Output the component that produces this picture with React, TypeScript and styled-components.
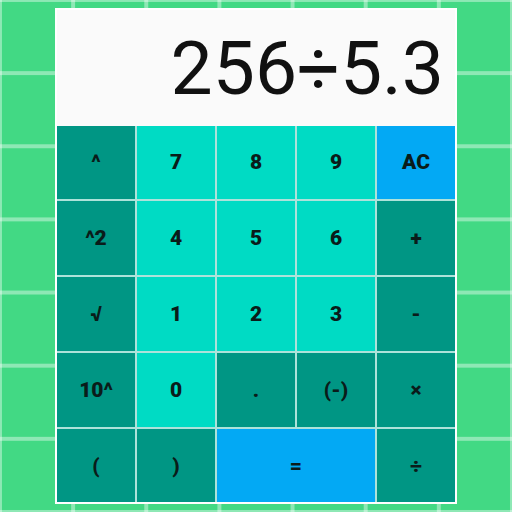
import styled, { createGlobalStyle } from 'styled-components';

const GlobalStyle = createGlobalStyle`
  html, body {
    margin: 0;
    padding: 0;
  }
  body {
    font-family: Roboto, "Noto Sans", sans-serif;
  }
`;

type Tone = 'dark' | 'light' | 'blue';

const tones: Record<Tone, string> = {
  dark: '#009684',
  light: '#00dbc4',
  blue: '#03a9f4',
};

const Page = styled.div`
  width: 512px;
  height: 512px;
  display: flex;
  align-items: center;
  justify-content: center;
  background-color: #42d984;
  background-image:
    linear-gradient(to right, rgba(255, 255, 255, 0.4) 4px, transparent 4px),
    linear-gradient(to bottom, rgba(255, 255, 255, 0.4) 4px, transparent 4px);
  background-size: calc(512px / 7) calc(512px / 7);
  background-position: -2px -2px;
`;

const Calculator = styled.div`
  width: 398px;
  padding: 2px;
  background: #ffffff;
  display: flex;
  flex-direction: column;
`;

const Display = styled.div`
  height: 116px;
  background: #fafafa;
  display: flex;
  align-items: center;
  justify-content: flex-end;
  padding-right: 11px;
  font-size: 75px;
  color: #111;
`;

const Keypad = styled.div`
  display: grid;
  grid-template-columns: repeat(5, 78px);
  grid-auto-rows: 73.8px;
  gap: 2px;
  background: #ade2da;
`;

const Key = styled.button<{ $tone: Tone; $span?: number }>`
  border: none;
  margin: 0;
  padding: 0;
  background: ${p => tones[p.$tone]};
  grid-column: span ${p => p.$span ?? 1};
  font-family: Roboto, "Noto Sans", sans-serif;
  font-weight: 900;
  font-size: 21px;
  color: #0a1c1a;
  display: flex;
  align-items: center;
  justify-content: center;
`;

const keys: { label: string; tone: Tone; span?: number }[] = [
  { label: '^', tone: 'dark' },
  { label: '7', tone: 'light' },
  { label: '8', tone: 'light' },
  { label: '9', tone: 'light' },
  { label: 'AC', tone: 'blue' },
  { label: '^2', tone: 'dark' },
  { label: '4', tone: 'light' },
  { label: '5', tone: 'light' },
  { label: '6', tone: 'light' },
  { label: '+', tone: 'dark' },
  { label: '√', tone: 'dark' },
  { label: '1', tone: 'light' },
  { label: '2', tone: 'light' },
  { label: '3', tone: 'light' },
  { label: '-', tone: 'dark' },
  { label: '10^', tone: 'dark' },
  { label: '0', tone: 'light' },
  { label: '.', tone: 'dark' },
  { label: '(-)', tone: 'dark' },
  { label: '×', tone: 'dark' },
  { label: '(', tone: 'dark' },
  { label: ')', tone: 'dark' },
  { label: '=', tone: 'blue', span: 2 },
  { label: '÷', tone: 'dark' },
];

const App = () => {
  return (
    <>
      <GlobalStyle />
      <Page>
        <Calculator>
          <Display>256÷5.3</Display>
          <Keypad>
            {keys.map(k => (
              <Key key={k.label} $tone={k.tone} $span={k.span}>
                {k.label}
              </Key>
            ))}
          </Keypad>
        </Calculator>
      </Page>
    </>
  );
};

export default App;
